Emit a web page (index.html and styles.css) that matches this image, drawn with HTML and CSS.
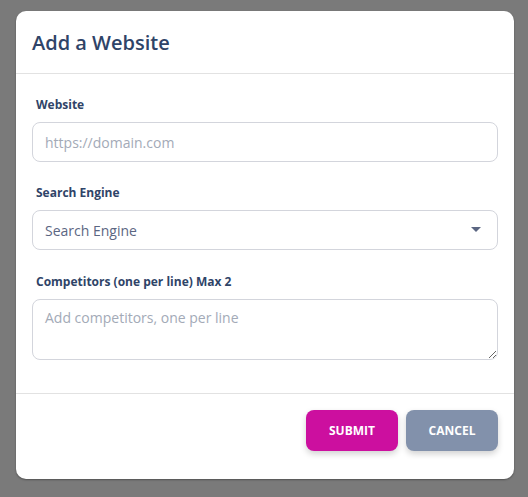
FILE: index.html
```html
<!DOCTYPE html>
<html lang="en">
<head>
<meta charset="utf-8">
<title>Add a Website</title>
<link rel="stylesheet" href="styles.css">
</head>
<body>
<div class="modal">
  <div class="modal-header">
    <h2 class="modal-title">Add a Website</h2>
  </div>
  <div class="modal-body">
    <div class="field">
      <label class="field-label">Website</label>
      <input class="control" type="text" placeholder="https://domain.com">
    </div>
    <div class="field">
      <label class="field-label">Search Engine</label>
      <div class="select">
        <span class="select-value">Search Engine</span>
        <svg class="caret" width="10" height="5" viewBox="0 0 10 5"><path d="M0 0 L10 0 L5 5 Z" fill="#5b6682"/></svg>
      </div>
    </div>
    <div class="field">
      <label class="field-label">Competitors (one per line) Max 2</label>
      <textarea class="control textarea" placeholder="Add competitors, one per line"></textarea>
    </div>
  </div>
  <div class="modal-footer">
    <button class="btn btn-submit">SUBMIT</button>
    <button class="btn btn-cancel">CANCEL</button>
  </div>
</div>
</body>
</html>
```

FILE: styles.css
```css
* { box-sizing: border-box; }
html, body { margin: 0; padding: 0; }
body {
  background: #7a7a7a;
  width: 528px;
  height: 497px;
  font-family: "Open Sans", "Noto Sans", sans-serif;
  padding: 11px 14px 0 16px;
}
.modal {
  width: 498px;
  height: 468px;
  background: #fff;
  border-radius: 10px;
  box-shadow: 0 1px 2px rgba(0,0,0,0.35);
  display: flex;
  flex-direction: column;
}
.modal-header {
  height: 63px;
  border-bottom: 1px solid #e2e2e2;
  padding: 0 16px;
  display: flex;
  align-items: center;
}
.modal-title {
  margin: 0;
  font-size: 20px;
  font-weight: 600;
  color: #2f4468;
  padding-top: 1px;
}
.modal-body {
  padding: 21px 16px 0 16px;
  height: 320px;
  border-bottom: 1px solid #e2e2e2;
}
.field { display: flex; flex-direction: column; margin-bottom: 21px; }
.field:nth-child(2) { margin-bottom: 22px; }
.field-label {
  font-size: 12px;
  font-weight: 700;
  line-height: 18px;
  color: #2f4468;
  padding-left: 4px;
  padding-top: 1px;
  margin-bottom: 8px;
}
.control {
  width: 466px;
  height: 40px;
  border: 1px solid #d3d5dc;
  border-radius: 8px;
  padding: 0 12px;
  font-family: "Open Sans", "Noto Sans", sans-serif;
  font-size: 14px;
  color: #4a5568;
  background: #fff;
  outline: none;
}
.control::placeholder { color: #a3aab7; }
.select {
  width: 466px;
  height: 40px;
  border: 1px solid #d3d5dc;
  border-radius: 8px;
  padding: 0 16px 0 12px;
  display: flex;
  align-items: center;
  justify-content: space-between;
}
.select-value { font-size: 14px; color: #5b6682; }
.caret { display: block; margin-top: -2px; }
.textarea {
  height: 61px;
  padding: 8px 12px;
  line-height: 20px;
  resize: vertical;
}
.modal-footer {
  display: flex;
  justify-content: flex-end;
  gap: 8px;
  padding: 16px 16px 0 0;
}
.btn {
  width: 92px;
  height: 41px;
  border: none;
  border-radius: 8px;
  color: #fff;
  font-family: "Open Sans", "Noto Sans", sans-serif;
  font-size: 12px;
  font-weight: 700;
  box-shadow: 0 3px 6px rgba(0,0,0,0.18);
}
.btn-submit { background: #cc0f9f; }
.btn-cancel { background: #8291ab; }
```
